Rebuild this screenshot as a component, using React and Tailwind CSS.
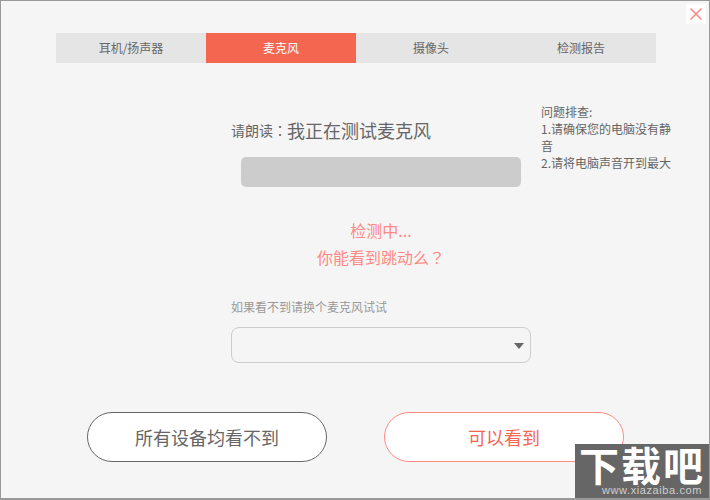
import React from 'react';

const TABS = ['耳机/扬声器', '麦克风', '摄像头', '检测报告'];

const App = () => {
  return (
    <div className="relative h-[500px] w-[710px] overflow-hidden border border-b-2 border-[#999999] bg-[#f5f5f5] font-['Noto_Sans_CJK_SC',sans-serif] text-[#666666]">
      {/* close */}
      <button className="absolute right-[3px] top-[3px] flex h-5 w-5 items-center justify-center bg-white">
        <svg width="14" height="14" viewBox="0 0 14 14" fill="none" stroke="#ff8a85" strokeWidth="1.6">
          <path d="M1.5 1.5L12.5 12.5M12.5 1.5L1.5 12.5" />
        </svg>
      </button>

      {/* tabs */}
      <div className="ml-[55px] mt-[32px] flex h-[30px] w-[600px] bg-[#e5e5e5] text-xs">
        {TABS.map((tab, i) => (
          <div
            key={tab}
            className={i === 1 ? 'flex w-[150px] items-center justify-center bg-[#f56651] text-white' : 'flex w-[150px] items-center justify-center'}
          >
            {tab}
          </div>
        ))}
      </div>

      {/* main */}
      <div className="ml-[230px] mt-[40px] flex">
        <div className="w-[300px]">
          <div className="mt-[14px] flex h-[26px] items-center">
            <span className="text-sm">请朗读<span className="font-['Noto_Sans_CJK_TC',sans-serif]">：</span></span>
            <span className="text-lg">我正在测试麦克风</span>
          </div>
          <div className="ml-[10px] mt-[14px] h-[30px] w-[280px] rounded-[5px] bg-[#cccccc]" />
          <div className="mt-[30px] text-center text-base leading-[27px] text-[#ff8a85]">
            <p>检测中...</p>
            <p>你能看到跳动么<span className="font-['Noto_Sans_CJK_TC',sans-serif]">？</span></p>
          </div>
          <p className="mt-[27px] text-xs leading-[18px] text-[#999999]">如果看不到请换个麦克风试试</p>
          <div className="relative mt-[11px] h-9 w-[300px] rounded-lg border border-[#cccccc]">
            <span className="absolute right-[6px] top-[15px] h-0 w-0 border-x-[5px] border-t-[6px] border-x-transparent border-t-[#666666]" />
          </div>
        </div>
        <div className="ml-[10px] w-[130px] text-xs leading-[17px]">
          <p>问题排查:</p>
          <p>1.请确保您的电脑没有静音</p>
          <p>2.请将电脑声音开到最大</p>
        </div>
      </div>

      {/* buttons */}
      <div className="ml-[86px] mt-[49px] flex gap-[57px] text-lg">
        <button className="h-[50px] w-[240px] rounded-full border border-[#666666] bg-white text-[#666666]">所有设备均看不到</button>
        <button className="h-[50px] w-[240px] rounded-full border border-[#ff8a85] bg-white text-[#f56651]">可以看到</button>
      </div>

      {/* watermark */}
      <div className="absolute bottom-[-2px] left-[574px] flex h-[56px] w-[134px] flex-col items-center bg-[#666666] text-white">
        <span className="text-[40px] font-bold leading-[40px] tracking-[2px]">下载吧</span>
        <span className="ml-[20px] font-['Liberation_Sans',sans-serif] text-[11px] leading-[13px] tracking-[0.6px] text-[#cfcfcf]">www.xiazaiba.com</span>
      </div>
    </div>
  );
};

export default App;
